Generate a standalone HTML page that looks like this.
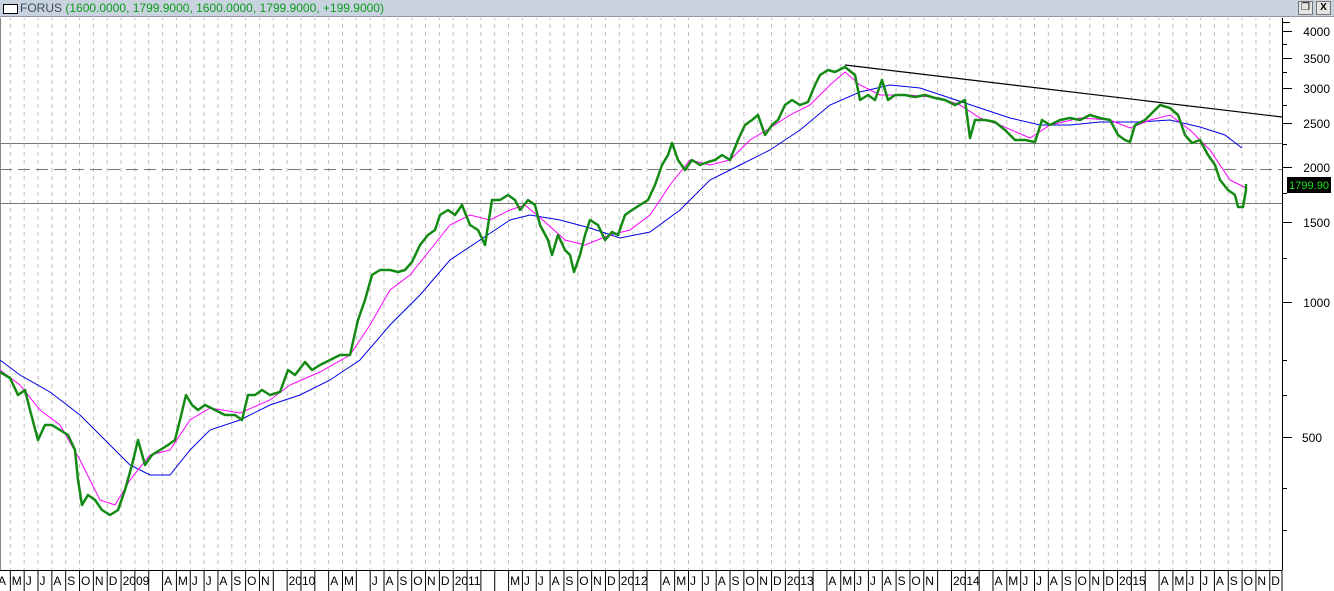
<!DOCTYPE html>
<html><head><meta charset="utf-8"><style>
html,body{margin:0;padding:0;background:#fff;}
body{width:1334px;height:591px;overflow:hidden;position:relative;font-family:"Liberation Sans",sans-serif;}
.hdr{position:absolute;left:0;top:0;width:1334px;height:16px;background:#c9d3df;border-bottom:1px solid #8a96a4;}
.hdr .t{position:absolute;left:20px;top:1px;font-size:12px;color:#3c4c60;white-space:nowrap;}
.hdr .t span{color:#0a9a1a;}
.box{position:absolute;left:3px;top:4px;width:13px;height:8px;border:1px solid #000;background:#fff;}
.btn{position:absolute;top:1px;width:13px;height:12px;border:1px solid #777;background:#e4e4e4;font-size:10px;line-height:12px;text-align:center;}
</style></head><body>
<div class="hdr"><div class="box"></div><div class="t">FORUS <span>(1600.0000, 1799.9000, 1600.0000, 1799.9000, +199.9000)</span></div>
<div class="btn" style="left:1298px">&#x2750;</div><div class="btn" style="left:1316px;font-weight:bold">X</div></div>
<svg width="1334" height="591" style="position:absolute;left:0;top:0" xmlns="http://www.w3.org/2000/svg">
<defs>
<pattern id="g" x="-4" y="0" width="13.84" height="8" patternUnits="userSpaceOnUse"><line x1="0.5" y1="0" x2="0.5" y2="4" stroke="#bdbdbd" stroke-width="1"/></pattern>
<pattern id="tk" x="-4" y="0" width="13.84" height="30" patternUnits="userSpaceOnUse"><line x1="0.5" y1="0" x2="0.5" y2="30" stroke="#000" stroke-width="1"/></pattern>
</defs>
<rect x="0" y="18" width="1282" height="552" fill="url(#g)"/>
<line x1="0.5" y1="18" x2="0.5" y2="570" stroke="#888"/>
<line x1="1282.5" y1="18" x2="1282.5" y2="570" stroke="#000"/>
<line x1="0" y1="143.5" x2="1282" y2="143.5" stroke="#777"/>
<line x1="0" y1="203.5" x2="1282" y2="203.5" stroke="#777"/>
<line x1="0" y1="169.5" x2="1282" y2="169.5" stroke="#777" stroke-dasharray="12,6"/>
<line x1="845" y1="65" x2="1282" y2="117" stroke="#000" stroke-width="1.2"/>
<polyline fill="none" stroke="#0000e6" stroke-width="1" points="0,360 20,375 50,392 80,415 110,445 130,465 150,475 170,475 190,450 210,430 240,420 270,405 300,395 330,380 360,360 390,325 420,295 450,260 480,240 510,220 530,215 560,220 590,228 620,238 650,232 680,210 710,180 740,165 770,150 800,130 830,105 860,92 890,85 920,88 950,98 980,108 1010,118 1040,125 1070,125 1100,122 1140,122 1170,120 1200,127 1225,135 1242,148"/>
<polyline fill="none" stroke="#ff00ff" stroke-width="1" points="0,370 20,385 40,410 60,425 80,460 100,500 115,505 130,480 150,455 170,450 190,420 210,408 240,413 270,400 290,385 320,372 350,355 370,325 390,290 410,275 430,250 450,225 470,215 490,220 510,210 525,205 545,222 565,240 585,245 610,235 630,230 650,215 670,185 690,160 710,165 730,160 750,140 770,128 790,115 810,105 830,85 845,72 860,85 880,95 910,95 940,98 960,105 980,118 1000,125 1030,138 1050,125 1080,118 1110,120 1130,128 1150,120 1170,115 1190,130 1210,150 1230,180 1246,188"/>
<polyline fill="none" stroke="#138a13" stroke-width="2.5" stroke-linejoin="round" points="0,372 10,378 18,395 25,390 30,410 38,440 45,425 52,425 60,430 68,435 75,450 78,480 82,505 88,495 95,500 102,510 110,515 118,510 125,490 132,465 138,440 145,465 152,455 160,450 168,445 175,440 180,420 186,395 192,405 198,410 205,405 215,410 225,415 235,415 242,420 248,395 255,395 262,390 270,395 280,392 288,370 295,375 305,362 312,370 320,365 330,360 340,355 350,355 358,320 365,300 372,275 380,270 390,270 398,272 405,270 412,262 420,245 428,235 435,230 440,215 448,210 455,215 462,205 470,225 478,230 485,245 492,200 500,200 508,195 515,200 520,210 528,200 535,205 540,225 548,240 552,255 558,235 565,250 570,255 574,272 580,255 585,235 590,220 598,225 605,240 612,232 618,235 625,215 632,210 640,205 648,200 655,185 662,165 668,155 672,143 678,160 685,170 692,160 700,165 708,162 715,160 722,155 730,160 738,140 745,125 752,120 758,115 765,135 772,125 778,120 785,105 792,100 800,105 808,102 815,85 820,75 828,70 835,72 845,67 855,75 860,100 868,95 875,100 882,80 888,100 895,95 905,95 915,97 925,95 935,98 945,100 955,105 965,100 970,138 975,120 985,120 995,122 1005,130 1015,140 1025,140 1035,142 1042,120 1050,125 1060,120 1070,118 1080,120 1090,115 1100,118 1110,120 1118,135 1125,140 1130,142 1135,125 1145,120 1155,110 1160,105 1170,108 1178,115 1185,135 1192,143 1200,140 1208,155 1215,165 1220,180 1228,190 1235,195 1238,207 1243,207 1246,190 1246,184"/>
<g stroke="#000" stroke-width="1">
<line x1="1282" y1="22.5" x2="1290" y2="22.5"/><line x1="1282" y1="31.5" x2="1292" y2="31.5"/><line x1="1282" y1="58.5" x2="1292" y2="58.5"/><line x1="1282" y1="88.5" x2="1292" y2="88.5"/><line x1="1282" y1="123.5" x2="1292" y2="123.5"/><line x1="1282" y1="167.5" x2="1292" y2="167.5"/><line x1="1282" y1="222.5" x2="1292" y2="222.5"/><line x1="1282" y1="302.5" x2="1292" y2="302.5"/><line x1="1282" y1="437.5" x2="1292" y2="437.5"/>
<line x1="1282" y1="44.5" x2="1287" y2="44.5"/><line x1="1282" y1="72.5" x2="1287" y2="72.5"/><line x1="1282" y1="105.5" x2="1287" y2="105.5"/><line x1="1282" y1="144.5" x2="1287" y2="144.5"/><line x1="1282" y1="193.5" x2="1287" y2="193.5"/><line x1="1282" y1="258.5" x2="1287" y2="258.5"/><line x1="1282" y1="360.5" x2="1287" y2="360.5"/><line x1="1282" y1="395.5" x2="1287" y2="395.5"/><line x1="1282" y1="488.5" x2="1287" y2="488.5"/><line x1="1282" y1="530.5" x2="1287" y2="530.5"/>
</g>
<g font-family="Liberation Sans" font-size="12" fill="#000" text-anchor="end">
<text x="1330" y="36">4000</text><text x="1330" y="63">3500</text><text x="1330" y="93">3000</text><text x="1330" y="128">2500</text><text x="1330" y="172">2000</text><text x="1330" y="227">1500</text><text x="1330" y="307">1000</text><text x="1322" y="442">500</text>
</g>
<rect x="1287" y="177" width="44" height="16" fill="#000"/>
<text x="1309" y="189" text-anchor="middle" font-family="Liberation Sans" font-size="11" textLength="40" lengthAdjust="spacingAndGlyphs" fill="#19e619">1799.90</text>
<line x1="0" y1="570.5" x2="1282" y2="570.5" stroke="#000"/>
<rect x="0" y="571" width="1282" height="20" fill="url(#tk)"/>
<line x1="1282" y1="570" x2="1282" y2="591" stroke="#000"/>
<g font-family="Liberation Sans" font-size="12" fill="#000">
<text x="-2" y="585">A</text><text x="11.8" y="585">M</text><text x="25.7" y="585">J</text><text x="39.5" y="585">J</text><text x="53.4" y="585">A</text><text x="67.2" y="585">S</text><text x="81" y="585">O</text><text x="94.9" y="585">N</text><text x="108.7" y="585">D</text>
<text x="122.6" y="585">2009</text><text x="164.1" y="585">A</text><text x="177.9" y="585">M</text><text x="191.8" y="585">J</text><text x="205.6" y="585">J</text><text x="219.4" y="585">A</text><text x="233.3" y="585">S</text><text x="247.1" y="585">O</text><text x="261" y="585">N</text>
<text x="288.6" y="585">2010</text><text x="330.2" y="585">A</text><text x="344" y="585">M</text><text x="371.7" y="585">J</text><text x="385.5" y="585">A</text><text x="399.4" y="585">S</text><text x="413.2" y="585">O</text><text x="427" y="585">N</text><text x="440.9" y="585">D</text>
<text x="454.7" y="585">2011</text><text x="510.1" y="585">M</text><text x="523.9" y="585">J</text><text x="537.8" y="585">J</text><text x="551.6" y="585">A</text><text x="565.4" y="585">S</text><text x="579.3" y="585">O</text><text x="593.1" y="585">N</text><text x="607" y="585">D</text>
<text x="620.8" y="585">2012</text><text x="662.3" y="585">A</text><text x="676.2" y="585">M</text><text x="690" y="585">J</text><text x="703.8" y="585">J</text><text x="717.7" y="585">A</text><text x="731.5" y="585">S</text><text x="745.4" y="585">O</text><text x="759.2" y="585">N</text><text x="773" y="585">D</text>
<text x="786.9" y="585">2013</text><text x="828.4" y="585">A</text><text x="842.2" y="585">M</text><text x="856.1" y="585">J</text><text x="869.9" y="585">J</text><text x="883.8" y="585">A</text><text x="897.6" y="585">S</text><text x="911.4" y="585">O</text><text x="925.3" y="585">N</text>
<text x="953" y="585">2014</text><text x="994.5" y="585">A</text><text x="1008.3" y="585">M</text><text x="1022.2" y="585">J</text><text x="1036" y="585">J</text><text x="1049.8" y="585">A</text><text x="1063.7" y="585">S</text><text x="1077.5" y="585">O</text><text x="1091.4" y="585">N</text><text x="1105.2" y="585">D</text>
<text x="1119" y="585">2015</text><text x="1160.6" y="585">A</text><text x="1174.4" y="585">M</text><text x="1188.2" y="585">J</text><text x="1202.1" y="585">J</text><text x="1215.9" y="585">A</text><text x="1229.8" y="585">S</text><text x="1243.6" y="585">O</text><text x="1257.4" y="585">N</text><text x="1271.3" y="585">D</text>
</g>
</svg>
</body></html>
